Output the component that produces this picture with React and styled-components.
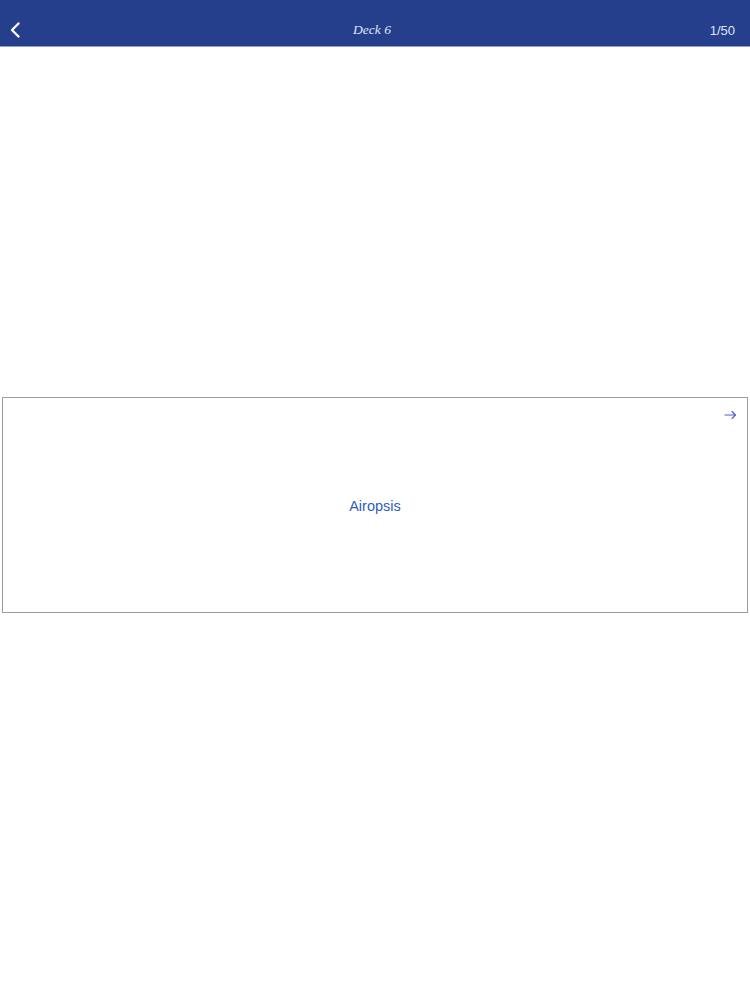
import React from 'react';
import styled, { createGlobalStyle } from 'styled-components';

const GlobalStyle = createGlobalStyle`
  html, body {
    margin: 0;
    padding: 0;
    background: #ffffff;
  }
  body {
    font-family: "Liberation Sans", Arial, sans-serif;
  }
`;

const Page = styled.div`
  width: 750px;
  min-height: 1000px;
  display: flex;
  flex-direction: column;
  background: #ffffff;
`;

const NavBar = styled.header`
  height: 47px;
  display: grid;
  grid-template-columns: 1fr auto 1fr;
  align-items: center;
  padding: 14px 15px 0 9px;
  box-sizing: border-box;
  background: #263f8c;
  border-bottom: 1px solid #8f9fd0;
`;

const BackButton = styled.button`
  justify-self: start;
  display: flex;
  align-items: center;
  padding: 0;
  border: none;
  background: none;
  cursor: pointer;
`;

const Title = styled.h1`
  margin: 0;
  font-family: "Liberation Serif", "Times New Roman", serif;
  font-style: italic;
  font-weight: normal;
  font-size: 13.5px;
  color: #dfe4f4;
`;

const Counter = styled.span`
  justify-self: end;
  font-size: 13px;
  color: #dfe4f4;
`;

const Body = styled.main`
  flex: 1;
  display: flex;
  flex-direction: column;
  padding: 350px 2px 0;
`;

const Card = styled.section`
  position: relative;
  height: 216px;
  display: flex;
  align-items: center;
  justify-content: center;
  border: 1.5px solid #9c9c9c;
  box-sizing: border-box;
`;

const Term = styled.span`
  font-size: 14.5px;
  color: #2f5cc2;
  transform: translateY(1px);
`;

const NextArrow = styled.button`
  position: absolute;
  top: 12px;
  right: 10px;
  padding: 0;
  border: none;
  background: none;
  display: flex;
  cursor: pointer;
`;

const Chevron = () => (
  <svg width="12" height="16" viewBox="0 0 12 16" fill="none">
    <path d="M9.5 1.5 L3 8 L9.5 14.5" stroke="#ffffff" strokeWidth="2.3" strokeLinecap="round" strokeLinejoin="round" />
  </svg>
);

const Arrow = () => (
  <svg width="13" height="10" viewBox="0 0 13 10" fill="none">
    <path d="M1 5 H11.5 M8 1.5 L11.5 5 L8 8.5" stroke="#4d5fc4" strokeWidth="1.1" strokeLinecap="round" strokeLinejoin="round" />
  </svg>
);

export default function App() {
  return (
    <Page>
      <GlobalStyle />
      <NavBar>
        <BackButton aria-label="Back">
          <Chevron />
        </BackButton>
        <Title>Deck 6</Title>
        <Counter>1/50</Counter>
      </NavBar>
      <Body>
        <Card>
          <NextArrow aria-label="Next">
            <Arrow />
          </NextArrow>
          <Term>Airopsis</Term>
        </Card>
      </Body>
    </Page>
  );
}
